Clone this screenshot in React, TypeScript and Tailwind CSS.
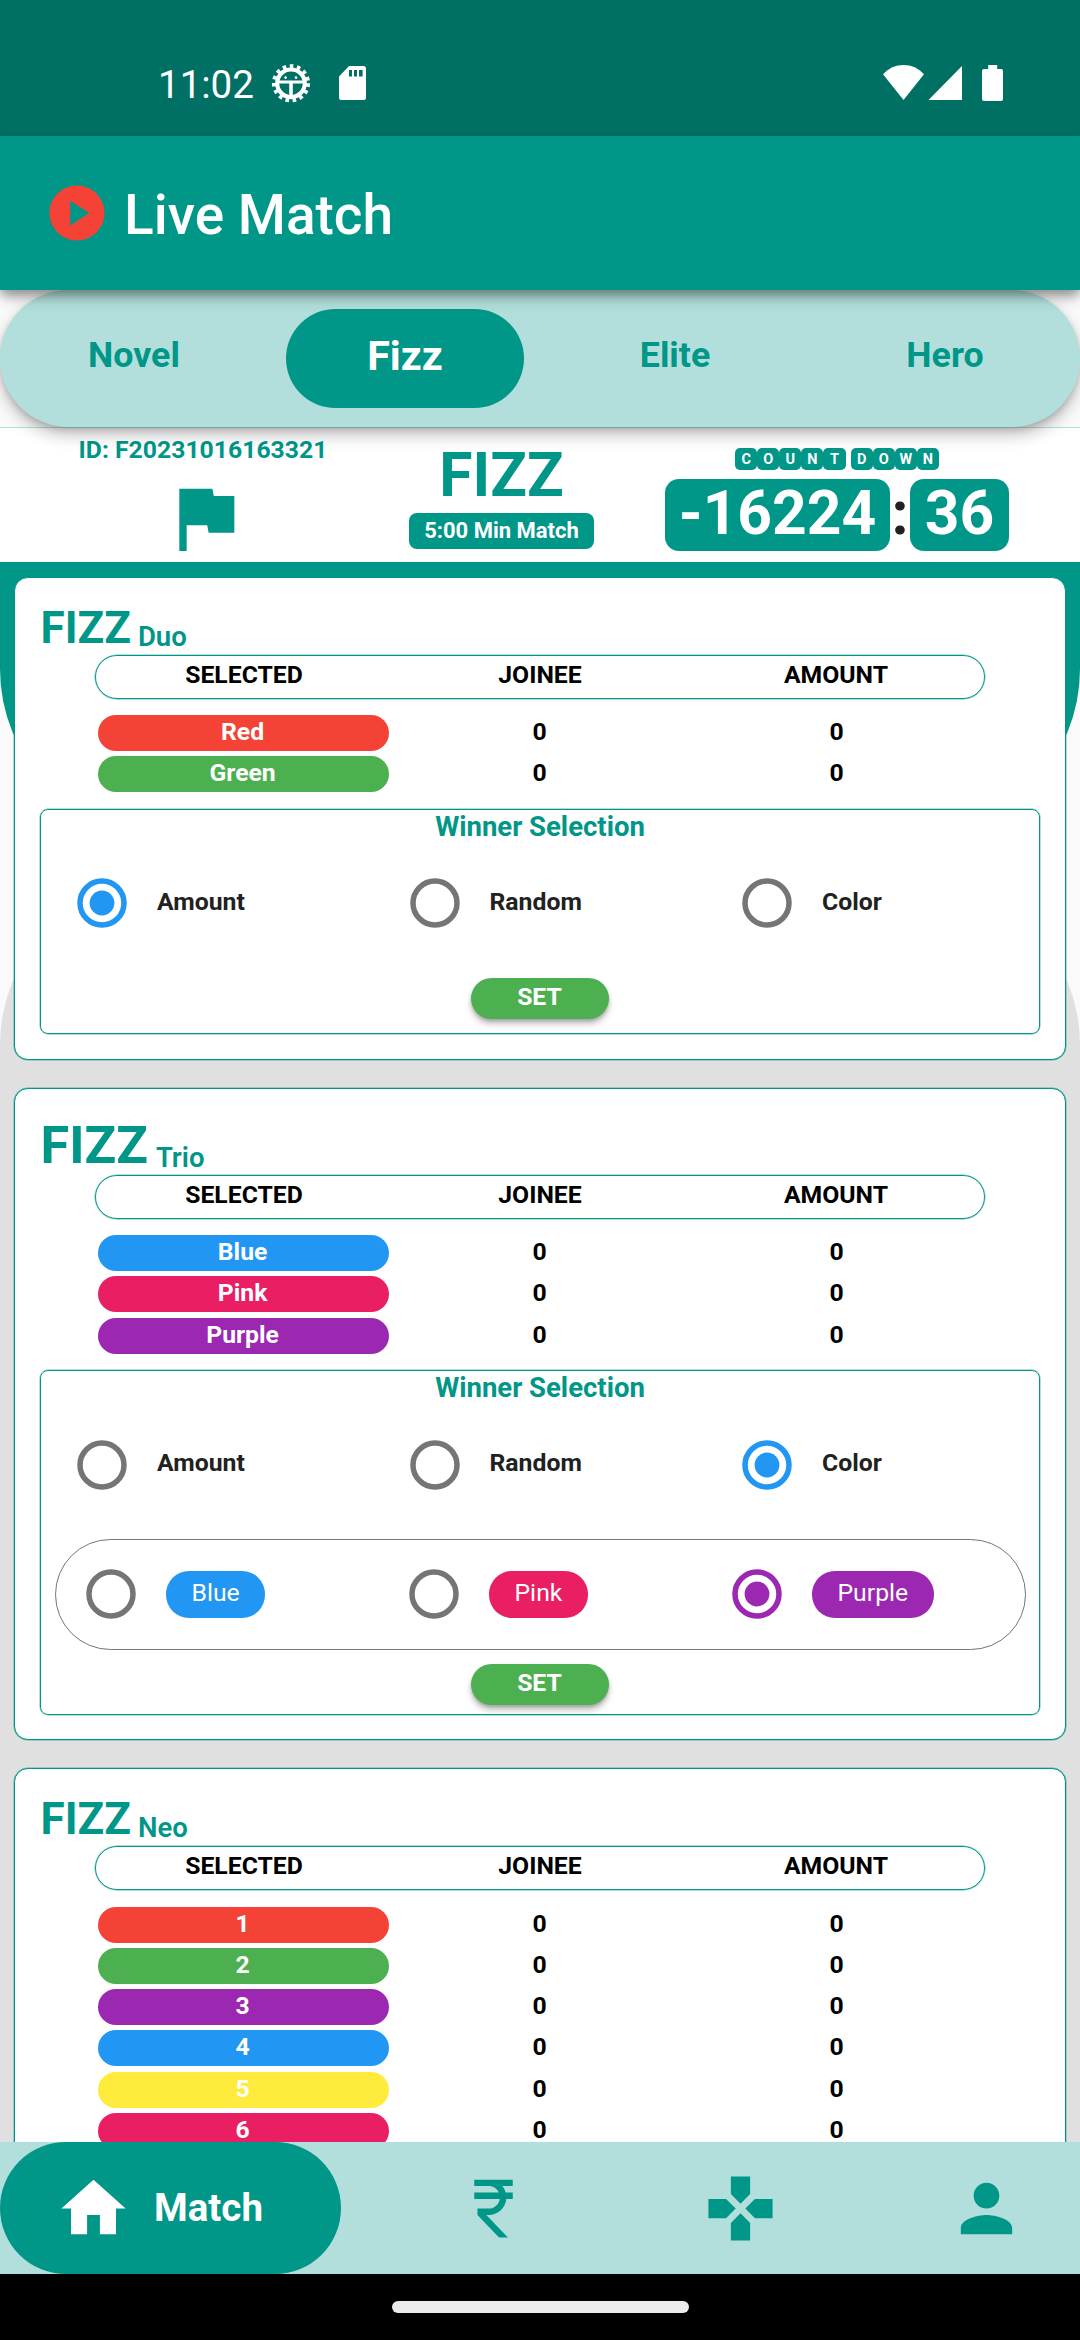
import type { ReactNode } from "react";

type Row = { label: string; color: string };

const RED = "bg-[#f44336]";
const GREEN = "bg-[#4caf50]";
const BLUE = "bg-[#2196f3]";
const PINK = "bg-[#e91e63]";
const PURPLE = "bg-[#9c27b0]";
const YELLOW = "bg-[#ffeb3b]";

function StatusBar() {
  return (
    <div className="flex h-[136px] shrink-0 bg-[#007065] pt-[63px] text-white">
      <span className="ml-[158px] h-[44px] w-[113px] text-[38.5px] leading-[44px]">11:02</span>
      <svg className="h-[40px] w-[40px]" viewBox="0 0 40 40">
        <circle cx="20" cy="20.3" r="16.8" fill="none" stroke="#fff" strokeWidth="4.6" strokeDasharray="3.5 3.54" />
        <circle cx="20" cy="20.3" r="13.8" fill="none" stroke="#fff" strokeWidth="4.2" />
        <path d="M8 17.5h24v3H21.8v13h-3.6v-13H8z" fill="#fff" />
        <circle cx="14.6" cy="14.6" r="1.3" fill="#fff" />
        <circle cx="25" cy="14.6" r="1.3" fill="#fff" />
      </svg>
      <svg className="ml-[28px] mt-[3px] h-[34px] w-[27px]" viewBox="0 0 27 34">
        <path d="M10 0h14.500a2.500 2.500 0 0 1 2.500 2.500v29a2.500 2.500 0 0 1-2.500 2.500h-22a2.500 2.500 0 0 1-2.500-2.500V10.500z" fill="#fff" />
        <path d="M10 4h3v6.500h-3zM15 4h3v6.500h-3zM20 4h3.600v6.500H20z" fill="#007065" />
      </svg>
      <svg className="ml-[517px] mt-[2px] h-[35px] w-[41px]" viewBox="0 0 41 35">
        <path d="M20.500 35 0 9.300C5.500 3.200 13 0 20.500 0S35.500 3.200 41 9.300z" fill="#fff" />
      </svg>
      <svg className="ml-[4px] mt-[2.500px] h-[34.500px] w-[34px]" viewBox="0 0 34 34.5">
        <path d="M34 0v34.500H0z" fill="#fff" />
      </svg>
      <svg className="ml-[20px] mt-[2px] h-[36px] w-[21px]" viewBox="0 0 21 36">
        <path d="M6.200 0h9v4H19a2 2 0 0 1 2 2v28a2 2 0 0 1-2 2H2a2 2 0 0 1-2-2V6a2 2 0 0 1 2-2h4.200z" fill="#fff" />
      </svg>
    </div>
  );
}

function AppBar() {
  return (
    <header className="relative z-20 flex h-[154px] shrink-0 items-center bg-[#009688] pl-[44px] shadow-[0_11px_14px_-3px_rgba(0,0,0,0.22),0_4px_10px_rgba(0,0,0,0.3)]">
      <svg className="h-[66px] w-[66px]" viewBox="0 0 24 24" fill="#f44336">
        <path d="M12 2C6.480 2 2 6.480 2 12s4.480 10 10 10 10-4.480 10-10S17.520 2 12 2zm-2.500 14.500v-9l7 4.500z" />
      </svg>
      <h1 className="ml-[14px] mt-[4px] text-[55px] leading-none font-medium text-white">Live Match</h1>
    </header>
  );
}

function Tabs() {
  return (
    <div className="relative z-10 h-[137px] shrink-0 bg-[#fafafa]">
      <nav className="grid h-full grid-cols-4 items-center rounded-full bg-[#b2dfdb] text-center text-[35.750px] font-bold text-[#009688] shadow-[0_8px_16px_rgba(0,0,0,0.24),0_3px_6px_rgba(0,0,0,0.14)]">
        <span className="pr-[2px] pb-[5px] leading-none">Novel</span>
        <span className="mx-auto h-[99px] w-[238px] rounded-[50px] bg-[#009688] text-[41.250px] leading-[94px] text-white">
          Fizz
        </span>
        <span className="pb-[5px] leading-none">Elite</span>
        <span className="pb-[5px] leading-none">Hero</span>
      </nav>
    </div>
  );
}

function Tiles({ word }: { word: string }) {
  return (
    <span className="flex">
      {word.split("").map((c, i) => (
        <span key={i} className="h-[22px] w-[22.100px] rounded-[5px] bg-[#009688] text-center text-[14.500px] leading-[23px] font-bold text-white">
          {c}
        </span>
      ))}
    </span>
  );
}

function MatchHeader() {
  return (
    <section className="flex h-[135px] shrink-0 border-t border-[#b2dfdb] bg-white text-[#009688]">
      <div className="ml-[80px] flex w-[246px] flex-col items-center">
        <span className="mt-[9px] text-[24.750px] leading-[26px] font-bold whitespace-nowrap">ID: F20231016163321</span>
        <svg className="mt-[11px] ml-[4px] h-[88px] w-[88px] shrink-0" viewBox="0 0 24 24" fill="currentColor">
          <path d="M14.400 6 14 4H5v17h2v-7h5.600l.4 2h7V6z" />
        </svg>
      </div>
      <div className="ml-[83px] flex w-[185px] flex-col items-center">
        <span className="mt-[17px] h-[62px] text-[60.500px] leading-[62px] font-bold">FIZZ</span>
        <span className="mt-[5.500px] h-[36px] w-full rounded-[8px] bg-[#009688] text-center text-[22px] leading-[36px] font-bold text-white">
          5:00 Min Match
        </span>
      </div>
      <div className="ml-[71px] flex w-[344px] flex-col items-center">
        <div className="mt-[20px] flex gap-[5px]">
          <Tiles word="COUNT" />
          <Tiles word="DOWN" />
        </div>
        <div className="mt-[8.500px] flex h-[72px] w-full justify-between text-center text-[60.500px] leading-[69px] font-bold text-white">
          <span className="w-[225px] rounded-[14px] bg-[#009688]">-16224</span>
          <span className="w-[19px] text-[#212121]">:</span>
          <span className="w-[99px] rounded-[14px] bg-[#009688]">36</span>
        </div>
      </div>
    </section>
  );
}

function Radio({ on, color = "text-[#2196f3]" }: { on?: boolean; color?: string }) {
  return (
    <svg className={`h-[50px] w-[50px] shrink-0 ${on ? color : "text-[#757575]"}`} viewBox="0 0 50 50">
      <circle cx="25" cy="25" r="22" fill="none" stroke="currentColor" strokeWidth="5.5" />
      {on && <circle cx="25" cy="25" r="12.4" fill="currentColor" />}
    </svg>
  );
}

function Card({
  name,
  big,
  height,
  rows,
  children,
}: {
  name: string;
  big?: boolean;
  height: string;
  rows: Row[];
  children?: ReactNode;
}) {
  return (
    <article
      className={`flex shrink-0 flex-col rounded-[14px] border border-[#009688] bg-white px-[25px] shadow-[0_0_0_0.5px_rgba(0,150,136,0.6)] ${height}`}
    >
      <div className={`flex shrink-0 items-end pl-[0.500px] text-[#009688] ${big ? "h-[86px]" : "h-[77px]"}`}>
        <span className={big ? "text-[52.250px] leading-[58px] font-bold" : "text-[44px] leading-[53px] font-bold"}>FIZZ</span>
        <span className={`text-[27.500px] font-semibold ${big ? "ml-[8px] leading-[34px]" : "ml-[7px] leading-[36px]"}`}>{name}</span>
      </div>
      <div className="mx-auto grid h-[44px] w-[890px] shrink-0 grid-cols-3 rounded-full border border-[#009688] text-center text-[24.750px] leading-[38px] font-bold text-black shadow-[0_0_0_0.5px_rgba(0,150,136,0.6)]">
        <span>SELECTED</span>
        <span>JOINEE</span>
        <span>AMOUNT</span>
      </div>
      <div className="mx-auto mt-[16.500px] flex w-[890px] shrink-0 flex-col gap-[5.250px] text-center text-[24.750px] leading-[34px] font-bold text-black">
        {rows.map((r) => (
          <div key={r.label} className="grid h-[36px] grid-cols-3">
            <span className={`ml-[3px] mr-[2.500px] rounded-full pr-[2px] text-white ${r.color}`}>{r.label}</span>
            <span className="pr-[1px]">0</span>
            <span>0</span>
          </div>
        ))}
      </div>
      {children}
    </article>
  );
}

function SetButton() {
  return (
    <button className="mx-auto block h-[41.500px] w-[138px] shrink-0 rounded-full bg-[#4caf50] pr-[1px] pb-[2px] text-center text-[24.750px] leading-none font-bold text-white shadow-[0_5px_6px_rgba(0,0,0,0.24),0_2px_3px_rgba(0,0,0,0.16)]">
      SET
    </button>
  );
}

function WinnerBox({ height, choice, children }: { height: string; choice: string; children: ReactNode }) {
  return (
    <div
      className={`mt-[16.500px] flex shrink-0 flex-col rounded-[8px] border border-[#009688] shadow-[0_0_0_0.5px_rgba(0,150,136,0.6)] ${height}`}
    >
      <div className="h-[32px] text-center text-[27.500px] leading-[33px] font-bold text-[#009688]">Winner Selection</div>
      <div className="mt-[36.500px] grid h-[50px] grid-cols-3 pl-[0.500px]">
        {["Amount", "Random", "Color"].map((o) => (
          <div key={o} className="flex items-center pl-[35.500px]">
            <Radio on={o === choice} />
            <span className="ml-[30px] pb-[2px] text-[24.750px] leading-none font-bold text-[#212121]">{o}</span>
          </div>
        ))}
      </div>
      {children}
    </div>
  );
}

function BottomNav() {
  return (
    <nav className="relative z-10 flex h-[132px] shrink-0 items-center bg-[#b2dfdb] text-[#009688]">
      <div className="flex h-full w-[341px] items-center rounded-full bg-[#009688] pl-[55px] text-white">
        <svg className="h-[77px] w-[77px]" viewBox="0 0 24 24" fill="currentColor">
          <path d="M10 20v-6h4v6h5v-8h3L12 3 2 12h3v8z" />
        </svg>
        <span className="ml-[22px] text-[38.500px] leading-none font-bold">Match</span>
      </div>
      <svg className="ml-[114px] h-[77px] w-[77px]" viewBox="0 0 24 24" fill="currentColor">
        <path d="M13.660 7C13.100 5.820 11.900 5 10.500 5H6V3h12v2h-3.260c.48.58.84 1.260 1.050 2H18v2h-2.020c-.25 2.800-2.610 5-5.480 5h-.73l6.730 7h-2.770L7 14v-2h3.500c1.760 0 3.220-1.300 3.460-3H6V7h7.660z" />
      </svg>
      <svg className="ml-[170px] h-[77px] w-[77px]" viewBox="0 0 24 24" fill="currentColor">
        <path d="M15 7.500V2H9v5.500l3 3zM7.500 9H2v6h5.500l3-3zM9 16.500V22h6v-5.500l-3-3zM16.500 9l-3 3 3 3H22V9z" />
      </svg>
      <svg className="ml-[169px] h-[77px] w-[77px]" viewBox="0 0 24 24" fill="currentColor">
        <path d="M12 12c2.210 0 4-1.790 4-4s-1.790-4-4-4-4 1.790-4 4 1.790 4 4 4zm0 2c-2.670 0-8 1.340-8 4v2h16v-2c0-2.660-5.330-4-8-4z" />
      </svg>
    </nav>
  );
}

const COLOR_OPTIONS = [
  { label: "Blue", fill: BLUE, width: "w-[323px]" },
  { label: "Pink", fill: PINK, width: "w-[323px]" },
  { label: "Purple", fill: PURPLE, width: "" },
];

export default function App() {
  return (
    <div className="flex h-[2340px] w-[1080px] flex-col overflow-hidden bg-[#fafafa] font-['Roboto',sans-serif]">
      <StatusBar />
      <AppBar />
      <Tabs />
      <MatchHeader />
      <main className="grid h-[1580px] shrink-0 overflow-hidden">
        <div className="col-start-1 row-start-1 flex h-[1580px] flex-col">
          <div className="h-[272px] rounded-b-[165px] bg-[#009688]" />
          <div className="mt-[46px] flex-1 rounded-t-[165px] bg-[#e0e0e0]" />
        </div>
        <div className="col-start-1 row-start-1 flex h-[1580px] flex-col gap-[28px] overflow-hidden px-[14px] pt-[14.500px]">
          <Card
            name="Duo"
            height="h-[483px]"
            rows={[
              { label: "Red", color: RED },
              { label: "Green", color: GREEN },
            ]}
          >
            <WinnerBox height="h-[225.500px]" choice="Amount">
              <div className="mt-[49.500px] flex">
                <SetButton />
              </div>
            </WinnerBox>
          </Card>
          <Card
            name="Trio"
            big
            height="h-[652.500px]"
            rows={[
              { label: "Blue", color: BLUE },
              { label: "Pink", color: PINK },
              { label: "Purple", color: PURPLE },
            ]}
          >
            <WinnerBox height="h-[345px]" choice="Color">
              <div className="mr-[13px] ml-[14px] mt-[49px] flex h-[111.500px] shrink-0 items-center rounded-full border border-[#757575] pl-[30px]">
                {COLOR_OPTIONS.map((o) => (
                  <div key={o.label} className={`flex items-center ${o.width}`}>
                    <Radio on={o.label === "Purple"} color="text-[#9c27b0]" />
                    <span className={`ml-[30px] h-[47.500px] rounded-[23px] px-[25.500px] text-[24.750px] leading-[44px] text-white ${o.fill}`}>
                      {o.label}
                    </span>
                  </div>
                ))}
              </div>
              <div className="mt-[13.500px] flex">
                <SetButton />
              </div>
            </WinnerBox>
          </Card>
          <Card
            name="Neo"
            height="h-[700px]"
            rows={[
              { label: "1", color: RED },
              { label: "2", color: GREEN },
              { label: "3", color: PURPLE },
              { label: "4", color: BLUE },
              { label: "5", color: YELLOW },
              { label: "6", color: PINK },
            ]}
          />
        </div>
      </main>
      <BottomNav />
      <div className="flex h-[66px] shrink-0 justify-center bg-black pt-[27px]">
        <div className="h-[12px] w-[297px] rounded-full bg-[#ececec]" />
      </div>
    </div>
  );
}
